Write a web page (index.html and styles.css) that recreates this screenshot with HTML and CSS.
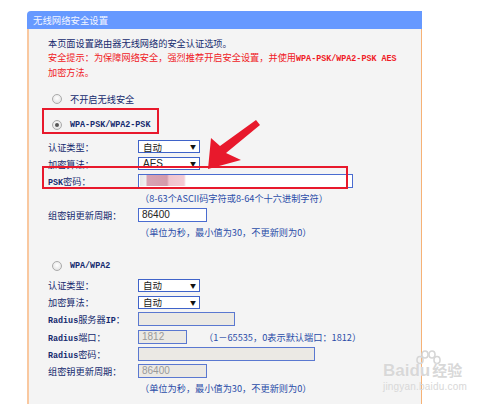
FILE: index.html
```html
<!DOCTYPE html>
<html>
<head>
<meta charset="utf-8">
<link rel="stylesheet" href="styles.css">
</head>
<body>
<div class="panel">
  <div class="head">无线网络安全设置</div>
  <div class="body">
    <div class="intro">
      <p>本页面设置路由器无线网络的安全认证选项。</p>
      <p class="warn">安全提示：为保障网络安全，强烈推荐开启安全设置，并使用<span class="en">WPA-PSK/WPA2-PSK AES</span></p>
      <p class="warn">加密方法。</p>
    </div>
    <div class="opt first"><span class="radio"></span><span>不开启无线安全</span></div>
    <div class="opt second"><span class="radio on"></span><span class="en">WPA-PSK/WPA2-PSK</span></div>
    <div class="group">
      <div class="row"><span class="lbl">认证类型：</span><span class="sel">自动<i>▼</i></span></div>
      <div class="row"><span class="lbl">加密算法：</span><span class="sel"><b class="sans">AES</b><i>▼</i></span></div>
      <div class="row"><span class="lbl"><span class="en">PSK</span>密码：</span><span class="inp psk"><span class="blur"></span></span></div>
      <div class="row hint">（8-63个ASCII码字符或8-64个十六进制字符）</div>
      <div class="row"><span class="lbl">组密钥更新周期：</span><span class="inp w69">86400</span></div>
      <div class="row hint">（单位为秒，最小值为30，不更新则为0）</div>
    </div>
    <div class="opt third"><span class="radio"></span><span class="en">WPA/WPA2</span></div>
    <div class="group g2">
      <div class="row"><span class="lbl">认证类型：</span><span class="sel">自动<i>▼</i></span></div>
      <div class="row"><span class="lbl">加密算法：</span><span class="sel">自动<i>▼</i></span></div>
      <div class="row"><span class="lbl"><span class="en">Radius</span>服务器<span class="en">IP</span>：</span><span class="inp dis w97"></span></div>
      <div class="row"><span class="lbl"><span class="en">Radius</span>端口：</span><span class="inp dis w49">1812</span><span class="porthint">（1－65535，0表示默认端口：1812）</span></div>
      <div class="row"><span class="lbl"><span class="en">Radius</span>密码：</span><span class="inp dis w177"></span></div>
      <div class="row"><span class="lbl">组密钥更新周期：</span><span class="inp dis w69">86400</span></div>
      <div class="row hint">（单位为秒，最小值为30，不更新则为0）</div>
    </div>
  </div>
</div>

<div class="mark m1"></div>
<div class="mark m2"></div>
<svg class="arrow" width="500" height="404" viewBox="0 0 500 404">
  <polygon points="208,169 211,138 220,146 256,120 260,125 226,153 241,160" fill="#e8192c"/>
</svg>

<div class="wm">
  <svg class="paw" width="30" height="16" viewBox="0 0 30 16">
    <g fill="none" stroke="#d6d6d6" stroke-width="1.6">
      <ellipse cx="7" cy="10" rx="3" ry="3.5"/>
      <ellipse cx="12" cy="4.5" rx="3" ry="3.5"/>
      <ellipse cx="19" cy="4.5" rx="3" ry="3.5"/>
      <ellipse cx="24" cy="10" rx="3" ry="3.5"/>
    </g>
  </svg>
  <div class="wm1"><span>Bai</span><span>du</span><span class="cj">经验</span></div>
  <div class="wm2">jingyan.baidu.com</div>
</div>
</body>
</html>
```

FILE: styles.css
```css
body {
  margin: 0;
  background: #ffffff;
  font-family: "Noto Sans CJK SC", sans-serif;
  font-size: 9.2px;
  color: #142a6e;
}
p { margin: 0; }

.panel {
  margin: 11px 0 0 27px;
  width: 395px;
}
.head {
  height: 18px;
  background: #6699ff;
  border-top-left-radius: 4px;
  color: #f2f5ff;
  font-size: 9.4px;
  line-height: 18px;
  padding-left: 6px;
}
.body {
  box-sizing: border-box;
  height: 375px;
  background: #f4f4f4;
  border-left: 2px solid #f9c8a0;
  border-right: 1px solid #f6b276;
  padding: 8px 0 0 19px;
}
.intro p { line-height: 13.5px; }
.warn { color: #f01a26; }
.en {
  font-family: "Liberation Mono", monospace;
  font-size: 8.4px;
  font-weight: bold;
}

.opt {
  display: flex;
  align-items: center;
  height: 14px;
  padding-left: 4px;
}
.opt.first { margin-top: 12.5px; }
.opt.second { margin-top: 12px; }
.opt.third { margin-top: 19px; }
.radio {
  box-sizing: border-box;
  width: 10px;
  height: 10px;
  border-radius: 50%;
  border: 1px solid #aaaaaa;
  background: radial-gradient(circle at 50% 40%, #ffffff, #dcdcdc);
  margin-right: 8px;
  position: relative;
}
.radio.on::after {
  content: "";
  position: absolute;
  left: 2px;
  top: 2px;
  width: 4px;
  height: 4px;
  border-radius: 50%;
  background: #555555;
}

.group { margin-top: 6px; }
.g2 { margin-top: 3.5px; }
.row {
  display: flex;
  align-items: center;
  height: 17px;
}
.g2 .row { height: 17.2px; }
.lbl { width: 90px; flex: none; }
.hint { padding-left: 92px; color: #2a4ca8; }
.porthint { margin-left: 17px; color: #2a4ca8; }

.sel {
  box-sizing: border-box;
  width: 62px;
  height: 13px;
  border: 1px solid #3f63c9;
  background: #ffffff;
  display: flex;
  align-items: center;
  justify-content: space-between;
  padding: 0 3px 0 4px;
  font-size: 9.5px;
  color: #222222;
}
.sel i {
  font-style: normal;
  font-size: 6px;
  color: #111111;
}
.sans {
  font-family: "Liberation Sans", Arial, sans-serif;
  font-weight: normal;
  font-size: 10px;
}
.inp {
  box-sizing: border-box;
  height: 14px;
  border: 1px solid #4a6cd0;
  background: #ffffff;
  font-family: "Liberation Sans", Arial, sans-serif;
  font-size: 10px;
  line-height: 12px;
  color: #222222;
  padding-left: 3px;
}
.inp.dis {
  background: #ebe9e4;
  color: #9a9a9a;
  border-color: #5a78d0;
}
.psk { width: 215px; display: flex; align-items: center; padding-left: 1px; }
.blur {
  width: 46px;
  height: 11px;
  background: linear-gradient(90deg, #e6e6e6 0, #f0f0f0 6px, #d8a2b3 7px, #d49aab 27px, #f0c3ce 29px, #f3cbd4 44px, #ffffff 46px);
}
.w49 { width: 49px; }
.w69 { width: 69px; }
.w97 { width: 97px; }
.w177 { width: 177px; }

.mark {
  position: absolute;
  box-sizing: border-box;
  border: 2.5px solid #e8192c;
}
.m1 { left: 42px; top: 108px; width: 117px; height: 26px; }
.m2 { left: 42px; top: 166px; width: 306px; height: 23px; }
.arrow { position: absolute; left: 0; top: 0; }

.wm {
  position: absolute;
  left: 383px;
  top: 350px;
  width: 95px;
  color: #d8d8d8;
  font-family: "Liberation Sans", Arial, sans-serif;
}
.paw { display: block; margin-left: 30px; }
.wm1 {
  display: flex;
  align-items: baseline;
  font-size: 17px;
  font-weight: bold;
  line-height: 16px;
  text-shadow: 0 0 1px #ffffff;
  margin-top: -4px;
}
.wm1 .cj {
  font-family: "Noto Sans CJK SC", sans-serif;
  font-size: 15px;
  margin-left: 2px;
}
.wm2 {
  font-size: 10px;
  margin-top: 2px;
  letter-spacing: 0.2px;
}
```
